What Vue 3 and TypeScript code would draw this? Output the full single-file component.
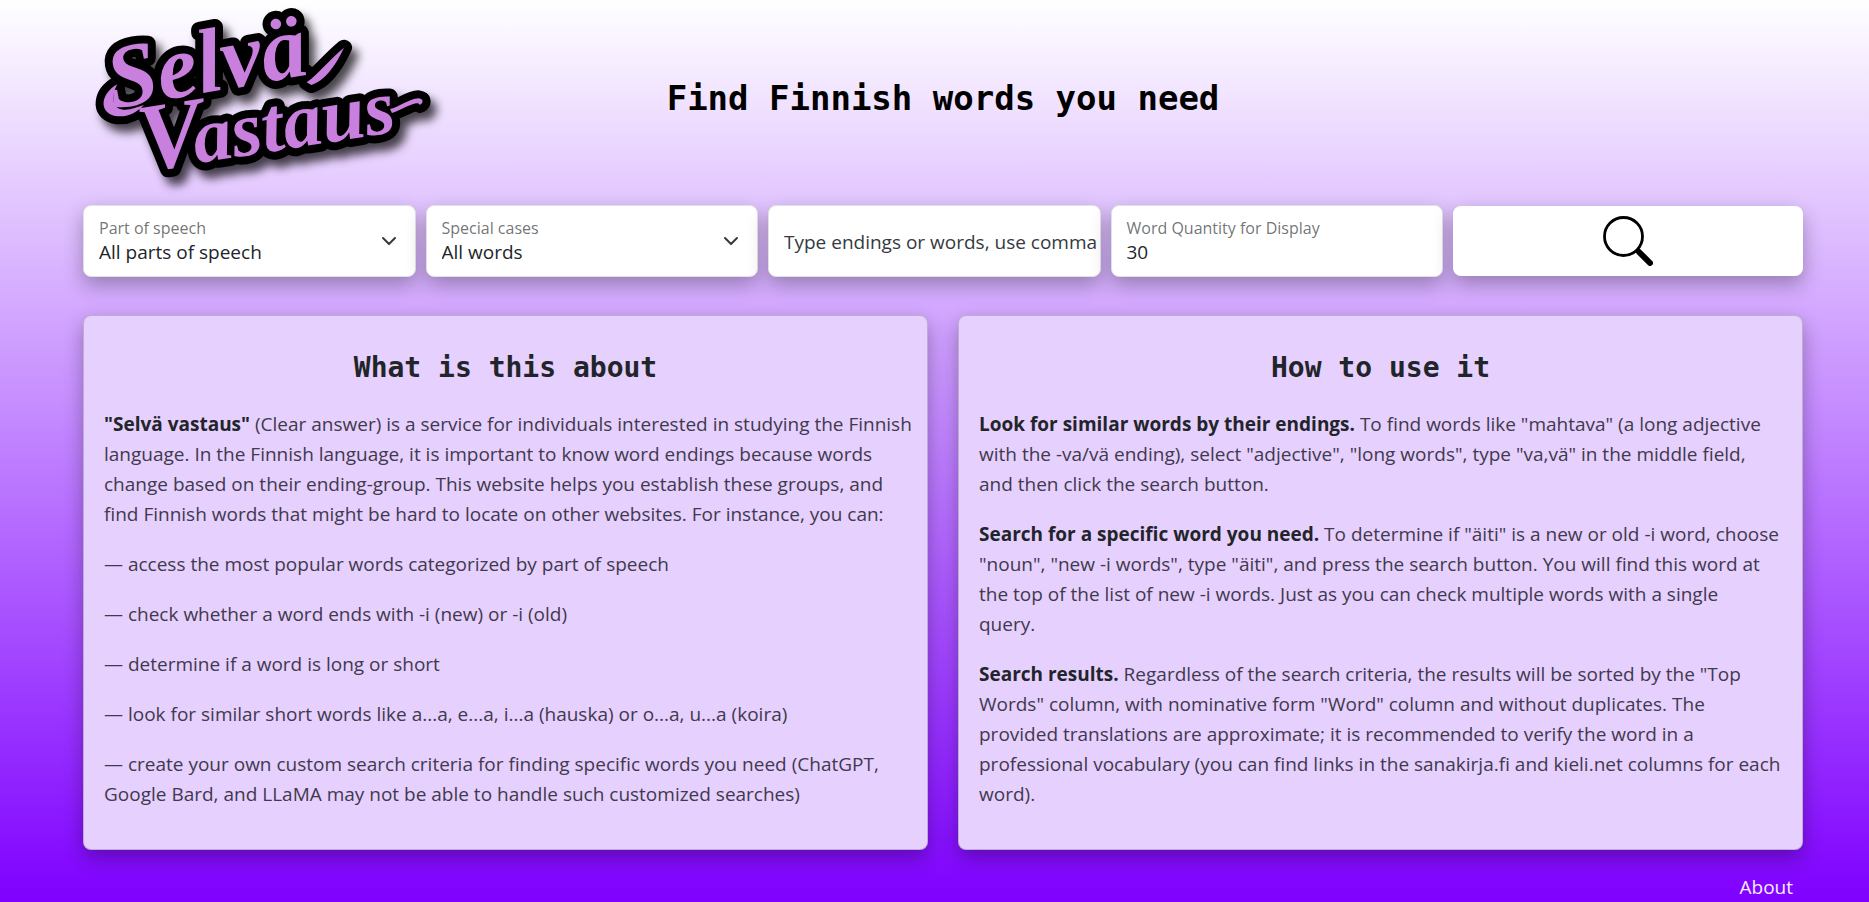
<script setup lang="ts">
import { ref } from 'vue'

interface Paragraph {
  lead?: string
  text: string
}

interface Panel {
  title: string
  paragraphs: Paragraph[]
}

const partOfSpeech = ref('All parts of speech')
const specialCase = ref('All words')
const query = ref('')
const quantity = ref('30')

const partsOfSpeech = ['All parts of speech', 'Noun', 'Adjective', 'Verb', 'Adverb']
const specialCases = ['All words', 'Long words', 'Short words', 'New -i words', 'Old -i words']
const logoLayers = ['outline', 'ink']

const panels: Panel[] = [
  {
    title: 'What is this about',
    paragraphs: [
      {
        lead: '"Selvä vastaus"',
        text: '(Clear answer) is a service for individuals interested in studying the Finnish language. In the Finnish language, it is important to know word endings because words change based on their ending-group. This website helps you establish these groups, and find Finnish words that might be hard to locate on other websites. For instance, you can:',
      },
      { text: '— access the most popular words categorized by part of speech' },
      { text: '— check whether a word ends with -i (new) or -i (old)' },
      { text: '— determine if a word is long or short' },
      { text: '— look for similar short words like a...a, e...a, i...a (hauska) or o...a, u...a (koira)' },
      {
        text: '— create your own custom search criteria for finding specific words you need (ChatGPT, Google Bard, and LLaMA may not be able to handle such customized searches)',
      },
    ],
  },
  {
    title: 'How to use it',
    paragraphs: [
      {
        lead: 'Look for similar words by their endings.',
        text: 'To find words like "mahtava" (a long adjective with the -va/vä ending), select "adjective", "long words", type "va,vä" in the middle field, and then click the search button.',
      },
      {
        lead: 'Search for a specific word you need.',
        text: 'To determine if "äiti" is a new or old -i word, choose "noun", "new -i words", type "äiti", and press the search button. You will find this word at the top of the list of new -i words. Just as you can check multiple words with a single\nquery.',
      },
      {
        lead: 'Search results.',
        text: 'Regardless of the search criteria, the results will be sorted by the "Top Words" column, with nominative form "Word" column and without duplicates. The provided translations are approximate; it is recommended to verify the word in a professional vocabulary (you can find links in the sanakirja.fi and kieli.net columns for each word).',
      },
    ],
  },
]
</script>

<template>
  <div class="page">
    <header class="header">
      <a class="logo" href="#" aria-label="Selvä Vastaus">
        <svg viewBox="9 0 1140 600" role="img" aria-hidden="true">
          <g v-for="layer in logoLayers" :key="layer" :class="layer">
            <text class="word" x="96" y="318" font-size="272" transform="rotate(-10 96 318)">Selvä</text>
            <text class="word" x="190" y="506" font-size="290" transform="rotate(-9 190 506)">V<tspan font-size="234" dx="-32">astaus</tspan></text>
            <path d="M112 244C62 272 56 326 102 338C140 346 168 330 192 306C166 314 136 328 112 314C92 298 98 270 112 244Z" />
            <path d="M680 238C716 212 748 170 792 134C766 190 732 234 694 246Z" />
            <path d="M930 318C960 312 984 288 1016 286C1032 288 1030 300 1020 306C1012 290 980 314 936 330Z" />
          </g>
        </svg>
      </a>
      <h1>Find Finnish words you need</h1>
    </header>

    <main>
      <form class="search" @submit.prevent>
        <div class="field">
          <label for="part">Part of speech</label>
          <select id="part" v-model="partOfSpeech">
            <option v-for="item in partsOfSpeech" :key="item">{{ item }}</option>
          </select>
        </div>
        <div class="field">
          <label for="special">Special cases</label>
          <select id="special" v-model="specialCase">
            <option v-for="item in specialCases" :key="item">{{ item }}</option>
          </select>
        </div>
        <div class="field">
          <input
            v-model="query"
            class="query"
            type="text"
            aria-label="Type endings or words, use comma"
            placeholder="Type endings or words, use comma"
          />
        </div>
        <div class="field">
          <label for="quantity">Word Quantity for Display</label>
          <input id="quantity" v-model="quantity" type="text" inputmode="numeric" />
        </div>
        <button type="submit" aria-label="Search">
          <svg viewBox="0 0 50 50" aria-hidden="true">
            <circle cx="20.5" cy="20.5" r="19" fill="none" stroke="#000" stroke-width="2.8" />
            <path d="M33.5 33.5L36 36" stroke="#000" stroke-width="4" />
            <path d="M36 36L47 47" stroke="#000" stroke-width="6" stroke-linecap="round" />
          </svg>
        </button>
      </form>

      <div class="panels">
        <section v-for="panel in panels" :key="panel.title" class="panel">
          <h2>{{ panel.title }}</h2>
          <p v-for="item in panel.paragraphs" :key="item.text">
            <strong v-if="item.lead">{{ item.lead }}</strong>{{ item.lead ? ' ' : '' }}{{ item.text }}
          </p>
        </section>
      </div>
    </main>

    <footer class="footer">
      <a href="#about">About</a>
    </footer>
  </div>
</template>

<style>
body {
  margin: 0;
}
</style>

<style scoped>
.page {
  box-sizing: border-box;
  display: flex;
  flex-direction: column;
  min-height: 100vh;
  padding: 0 66px 0 83px;
  color: #212529;
  font-family: "Open Sans", "Noto Sans", sans-serif;
  font-size: 19px;
  line-height: 30px;
  background: linear-gradient(#fff, #7f00ff);
}

.header {
  display: grid;
  grid-template-columns: 1fr auto 1fr;
  align-items: center;
  height: 205px;
}

.logo svg {
  display: block;
  width: 380px;
  height: 200px;
  overflow: visible;
  filter: drop-shadow(6px 8px 5px rgba(0, 0, 0, 0.7));
}

.word {
  font-family: "Liberation Serif", serif;
  font-style: italic;
  font-weight: 700;
}

.outline {
  fill: #000;
  stroke: #000;
  stroke-width: 48px;
  stroke-linejoin: round;
}

.ink {
  fill: #c97fdd;
}

h1,
h2 {
  margin: 0;
  font-family: "DejaVu Sans Mono", monospace;
  font-weight: 700;
  text-align: center;
}

h1 {
  padding-bottom: 10px;
  color: #000;
  font-size: 34px;
  line-height: 40px;
}

h2 {
  margin-bottom: 21px;
  font-size: 28px;
  line-height: 40px;
}

.search {
  display: grid;
  grid-template-columns: repeat(4, minmax(0, 19fr)) minmax(0, 20fr);
  align-items: center;
  gap: 10px;
}

.field {
  box-sizing: border-box;
  display: grid;
  height: 72px;
  border: 1px solid #dee2e6;
  border-radius: 8px;
  background: #fff;
  box-shadow: 0 8px 20px rgba(0, 0, 0, 0.3);
}

.field label {
  z-index: 1;
  grid-area: 1 / 1;
  align-self: start;
  padding: 12px 15px 0;
  color: rgba(33, 37, 41, 0.65);
  font-size: 16px;
  line-height: 20px;
  pointer-events: none;
}

.field select,
.field input {
  box-sizing: border-box;
  grid-area: 1 / 1;
  width: 100%;
  min-width: 0;
  height: 100%;
  margin: 0;
  padding: 22px 15px 0;
  border: 0;
  border-radius: 8px;
  color: #212529;
  font: inherit;
  background: transparent;
}

.field select {
  appearance: none;
  background: url("data:image/svg+xml,%3Csvg xmlns='http://www.w3.org/2000/svg' viewBox='0 0 16 16'%3E%3Cpath fill='none' stroke='%23343a40' stroke-linecap='round' stroke-linejoin='round' stroke-width='2' d='m2 5 6 6 6-6'/%3E%3C/svg%3E") no-repeat right 18px center / 16px 16px;
}

.field .query {
  padding: 2px 2px 0 15px;
}

.query::placeholder {
  color: #343a40;
  opacity: 1;
}

.search button {
  display: grid;
  place-items: center;
  height: 70px;
  padding: 0;
  border: 0;
  border-radius: 8px;
  background: #fff;
  box-shadow: 0 8px 20px rgba(0, 0, 0, 0.3);
  cursor: pointer;
}

.search button svg {
  width: 50px;
  height: 50px;
}

.panels {
  display: grid;
  grid-template-columns: repeat(2, minmax(0, 1fr));
  gap: 30px;
  margin-top: 38px;
}

.panel {
  padding: 32px 20px 20px;
  border: 1px solid rgba(0, 0, 0, 0.175);
  border-radius: 8px;
  background: #e6d0fe;
  box-shadow: 0 8px 20px rgba(0, 0, 0, 0.3);
}

.panel:first-child {
  padding-right: 12px;
}

.panel:first-child h2 {
  padding-right: 8px;
}

.panel p {
  margin: 0 0 20px;
  color: #41394d;
  white-space: pre-line;
}

.panel strong {
  color: #212529;
}

.footer {
  margin-top: auto;
  padding: 0 10px;
  text-align: right;
}

.footer a {
  color: #f8ebff;
  text-decoration: none;
}
</style>
